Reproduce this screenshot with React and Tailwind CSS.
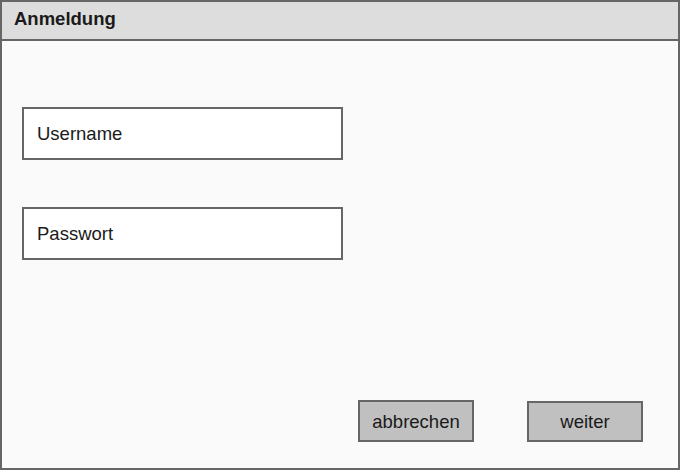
import React from "react";

export default function App() {
  return (
    <div className="w-[680px] h-[470px] bg-white" style={{ fontFamily: '"Liberation Sans", Arial, sans-serif' }}>
      <div className="w-[680px] h-[470px] border-2 border-[#666666] bg-[#fafafa] flex flex-col text-[#1a1a1a]">
        <div className="h-[39px] shrink-0 bg-[#dddddd] border-b-2 border-[#666666] flex items-center pl-[12px] pb-[2px]">
          <span className="text-[18.5px] font-bold leading-none">Anmeldung</span>
        </div>
        <div className="flex-1 flex flex-col pl-[20px]">
          <div className="mt-[66px] w-[321px] h-[53px] border-2 border-[#666666] bg-white flex items-center pl-[13px] pt-[2px]">
            <span className="text-[18.5px] leading-none">Username</span>
          </div>
          <div className="mt-[47px] w-[321px] h-[53px] border-2 border-[#666666] bg-white flex items-center pl-[13px] pt-[2px]">
            <span className="text-[18.5px] leading-none">Passwort</span>
          </div>
          <div className="mt-auto mb-[26px] flex items-start justify-end pr-[35px] gap-[53px]">
            <div className="w-[116px] h-[42px] border-2 border-[#666666] bg-[#c0c0c0] flex items-center justify-center pt-[2px]">
              <span className="text-[18.5px] leading-none">abbrechen</span>
            </div>
            <div className="mt-px w-[116px] h-[41px] border-2 border-[#666666] bg-[#c0c0c0] flex items-center justify-center pt-[1px]">
              <span className="text-[18.5px] leading-none">weiter</span>
            </div>
          </div>
        </div>
      </div>
    </div>
  );
}
